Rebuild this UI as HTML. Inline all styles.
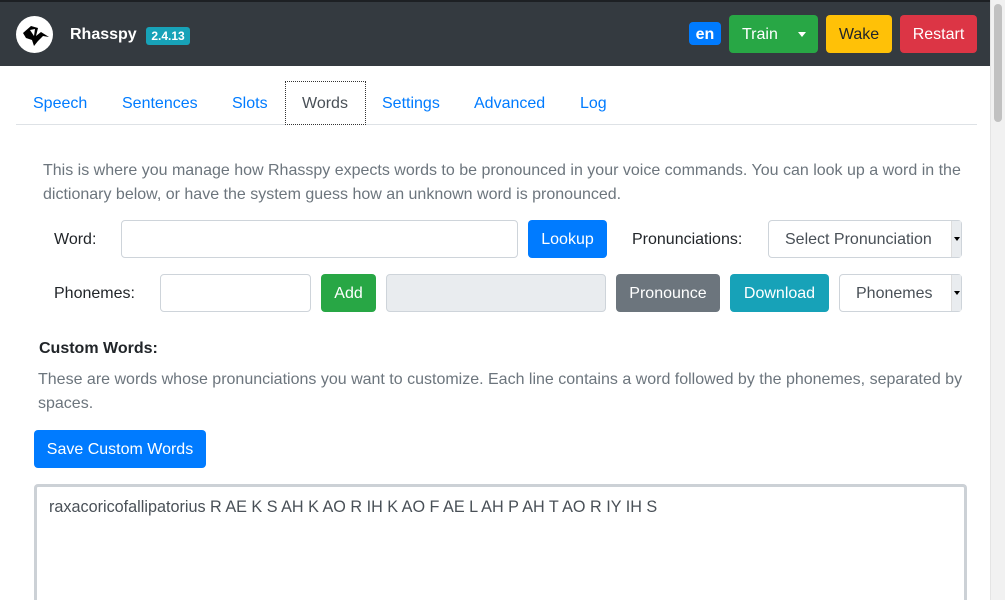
<!DOCTYPE html>
<html><head><style>
*{box-sizing:border-box;margin:0;padding:0}
html,body{width:1005px;height:600px;overflow:hidden}
body{background:#fff;font-family:"Liberation Sans",sans-serif;font-size:16px;color:#212529;position:relative}
.a{position:absolute}
.btn{position:absolute;border-radius:4px;color:#fff;display:flex;align-items:center;justify-content:center;font-size:16px;padding-top:2px}
.inp{position:absolute;border:1px solid #ced4da;border-radius:4px;background:#fff}
.lbl{position:absolute;color:#212529}
.tab{position:absolute;top:95px;color:#007bff}
.sel{position:absolute;border:1px solid #ced4da;border-radius:4px;background:#fff;color:#495057;display:flex;align-items:center;padding-left:16px;padding-top:2px}
.sel .ar{position:absolute;right:0;top:0;bottom:0;width:10px;background:#e9ecef;border-left:1px solid #ddd}
.sel .ar:after{content:"";position:absolute;left:2px;top:16px;border-left:3px solid transparent;border-right:3px solid transparent;border-top:4px solid #000}
</style></head><body>
<div class="a" style="left:0;top:0;width:990px;height:2px;background:#1d2024"></div>
<div class="a" style="left:0;top:2px;width:990px;height:64px;background:#343a40"></div>
<div class="a" style="left:16px;top:16px;width:37px;height:37px;border-radius:50%;background:#fff"></div>
<svg class="a" style="left:16px;top:16px" width="37" height="37" viewBox="0 0 37 37"><path d="M7 17 L15 10 L22 12 L20 20 L25 16 L33 21 L27 20 L22 25 L18 30 L16 24 L10 22 Z" fill="#000"/><path d="M14 14 L19 13 L18 20 Z" fill="#fff"/></svg>
<div class="a" style="left:70px;top:26px;color:#fff;font-weight:bold;font-size:16px">Rhasspy</div>
<div class="a" style="left:146px;top:27px;width:44px;height:18px;background:#17a2b8;border-radius:3px;color:#fff;font-size:12px;font-weight:bold;text-align:center;line-height:19px">2.4.13</div>
<div class="btn" style="left:689px;top:22px;width:32px;height:23px;background:#007bff;font-weight:bold;border-radius:4px">en</div>
<div class="btn" style="left:729px;top:15px;width:89px;height:38px;background:#28a745;justify-content:flex-start;padding-left:13px">Train</div>
<div class="a" style="left:798px;top:32px;border-left:4px solid transparent;border-right:4px solid transparent;border-top:5px solid #fff"></div>
<div class="btn" style="left:826px;top:15px;width:66px;height:38px;background:#ffc107;color:#212529">Wake</div>
<div class="btn" style="left:900px;top:15px;width:77px;height:38px;background:#dc3545">Restart</div>
<div class="a" style="left:990px;top:0;width:15px;height:600px;background:#f1f1f1;border-left:1px solid #e4e4e4"></div>
<div class="a" style="left:994px;top:4px;width:8px;height:118px;background:#c1c1c1;border-radius:4px"></div>

<div class="a" style="left:16px;top:124px;width:961px;height:1px;background:#dee2e6"></div>
<div class="a" style="left:285px;top:81px;width:81px;height:44px;border:1px dotted #333;background:#fff"></div>
<div class="tab" style="left:33px">Speech</div>
<div class="tab" style="left:122px">Sentences</div>
<div class="tab" style="left:232px">Slots</div>
<div class="tab" style="left:302px;color:#495057">Words</div>
<div class="tab" style="left:382px">Settings</div>
<div class="tab" style="left:474px">Advanced</div>
<div class="tab" style="left:580px">Log</div>

<div class="a" style="left:43px;top:159px;width:930px;color:#6c757d;line-height:24px">This is where you manage how Rhasspy expects words to be pronounced in your voice commands. You can look up a word in the dictionary below, or have the system guess how an unknown word is pronounced.</div>

<div class="lbl" style="left:54px;top:231px">Word:</div>
<div class="inp" style="left:121px;top:220px;width:397px;height:38px"></div>
<div class="btn" style="left:528px;top:220px;width:79px;height:38px;background:#007bff">Lookup</div>
<div class="lbl" style="left:632px;top:231px">Pronunciations:</div>
<div class="sel" style="left:768px;top:220px;width:194px;height:38px">Select Pronunciation<div class="ar"></div></div>

<div class="lbl" style="left:54px;top:285px">Phonemes:</div>
<div class="inp" style="left:160px;top:274px;width:151px;height:38px"></div>
<div class="btn" style="left:321px;top:274px;width:55px;height:38px;background:#28a745">Add</div>
<div class="inp" style="left:386px;top:274px;width:220px;height:38px;background:#e9ecef"></div>
<div class="btn" style="left:616px;top:274px;width:104px;height:38px;background:#6c757d">Pronounce</div>
<div class="btn" style="left:730px;top:274px;width:99px;height:38px;background:#17a2b8">Download</div>
<div class="sel" style="left:839px;top:274px;width:123px;height:38px">Phonemes<div class="ar"></div></div>

<div class="a" style="left:39px;top:340px;font-weight:bold">Custom Words:</div>
<div class="a" style="left:38px;top:368px;width:935px;color:#6c757d;line-height:24px">These are words whose pronunciations you want to customize. Each line contains a word followed by the phonemes, separated by spaces.</div>
<div class="btn" style="left:34px;top:430px;width:172px;height:38px;background:#007bff">Save Custom Words</div>
<div class="a" style="left:34px;top:484px;width:933px;height:116px;border:3px solid #ccd1d6;border-bottom:none;border-radius:4px 4px 0 0;padding:11px 12px;color:#495057;font-size:16.2px">raxacoricofallipatorius R AE K S AH K AO R IH K AO F AE L AH P AH T AO R IY IH S</div>
</body></html>
